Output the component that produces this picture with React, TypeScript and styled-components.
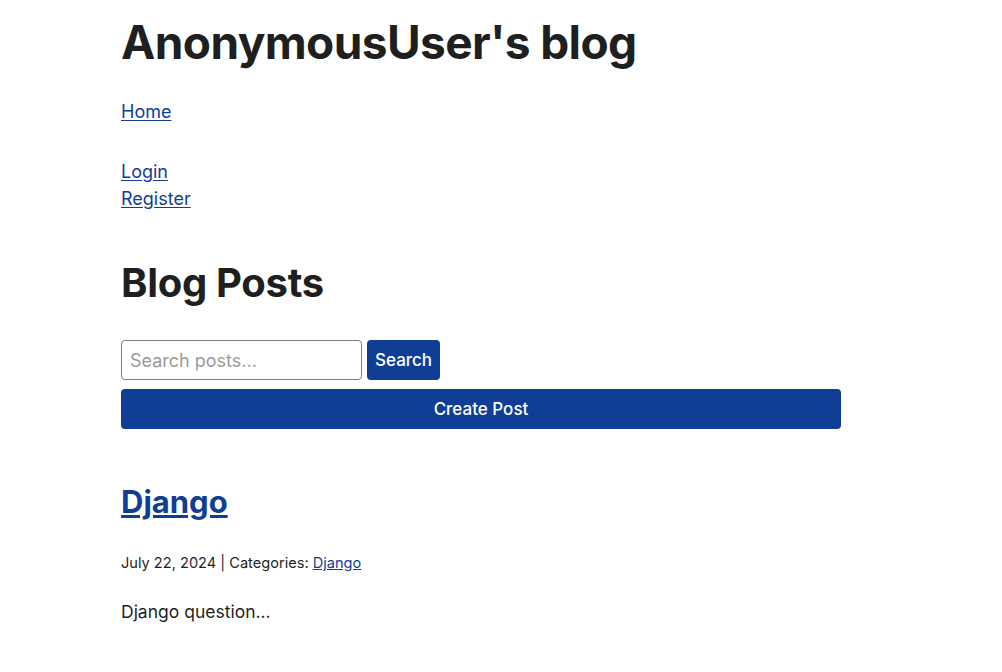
import React from "react";
import styled, { createGlobalStyle } from "styled-components";

const Global = createGlobalStyle`
  html, body { margin: 0; padding: 0; background: #fff; }
  body { font-family: Inter, "Noto Sans", sans-serif; color: #1f1f1f; }
  * { box-sizing: border-box; }
`;

const Page = styled.div`
  max-width: 800px;
  margin: 0 auto;
  padding: 0 20px;
`;

const Title = styled.h1`
  font-size: 46px;
  font-weight: 700;
  margin: 15px 0 28px;
  line-height: 1.2;
  letter-spacing: -0.6px;
`;

const NavList = styled.nav`
  display: flex;
  flex-direction: column;
  font-size: 18px;
  line-height: 27px;
`;

const Link = styled.a`
  color: #0f3e96;
  text-decoration: underline;
  text-underline-offset: 2px;
`;

const Spacer = styled.div`
  height: 33px;
`;

const SectionTitle = styled.h2`
  font-size: 40px;
  font-weight: 700;
  margin: 47px 0 33px;
  line-height: 1.2;
  letter-spacing: -0.3px;
`;

const Form = styled.form`
  display: flex;
  gap: 5px;
  margin-bottom: 9px;
`;

const Input = styled.input`
  width: 241px;
  height: 40px;
  border: 1px solid #7b7b86;
  border-radius: 4px;
  font-family: inherit;
  font-size: 18px;
  padding: 0 8px;
  &::placeholder { color: #9a9a9a; }
`;

const Button = styled.button<{ $wide?: boolean }>`
  height: 40px;
  background: #0f3e96;
  color: #fff;
  border: none;
  border-radius: 4px;
  font-family: inherit;
  font-size: 17px;
  font-weight: 500;
  padding: 0 8px;
  width: ${(p) => (p.$wide ? "720px" : "auto")};
  display: block;
`;

const PostTitle = styled.h2`
  font-size: 31px;
  font-weight: 700;
  margin: 54px 0 34px;
  line-height: 1.2;
`;

const Meta = styled.p`
  font-size: 14.6px;
  margin: 0 0 29px;
`;

const SmallLink = styled(Link)`
  text-underline-offset: 1px;
`;

const Excerpt = styled.p`
  font-size: 17.5px;
  margin: 0;
`;

export default function App() {
  return (
    <>
      <Global />
      <Page>
        <Title>AnonymousUser's blog</Title>
        <NavList>
          <div><Link href="#">Home</Link></div>
          <Spacer />
          <div><Link href="#">Login</Link></div>
          <div><Link href="#">Register</Link></div>
        </NavList>
        <SectionTitle>Blog Posts</SectionTitle>
        <Form onSubmit={(e) => e.preventDefault()}>
          <Input placeholder="Search posts..." />
          <Button type="submit">Search</Button>
        </Form>
        <Button $wide>Create Post</Button>
        <PostTitle><Link href="#">Django</Link></PostTitle>
        <Meta>July 22, 2024 | Categories: <SmallLink href="#">Django</SmallLink></Meta>
        <Excerpt>Django question...</Excerpt>
      </Page>
    </>
  );
}
